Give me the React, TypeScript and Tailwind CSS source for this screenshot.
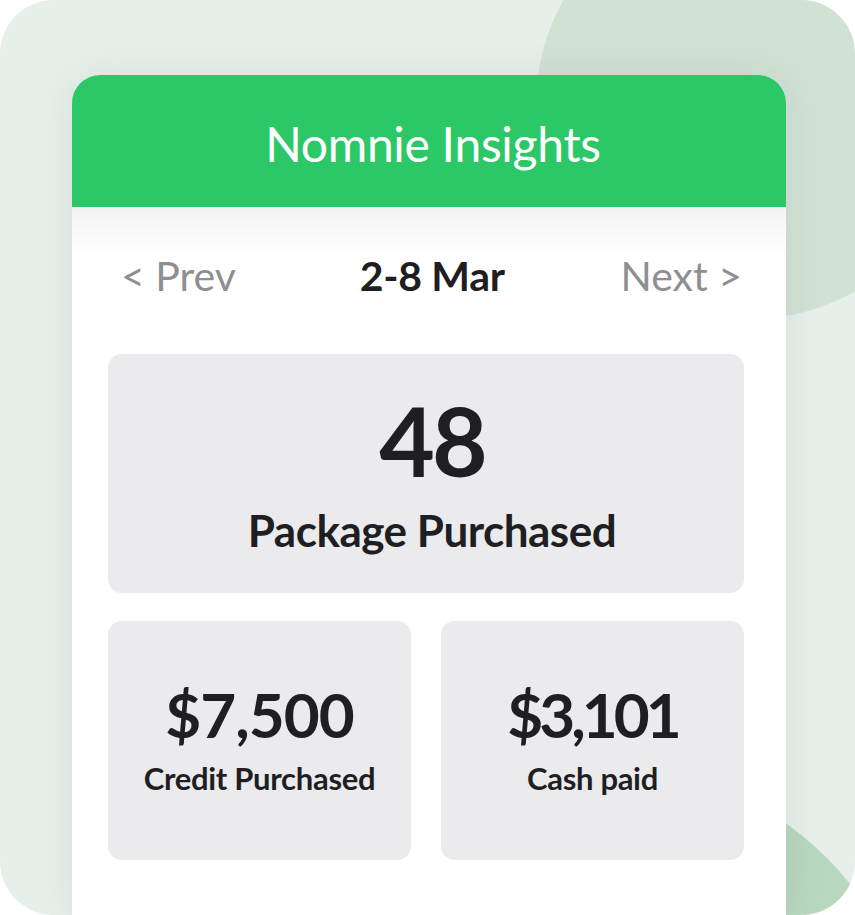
import React from "react";

export default function App() {
  const font = { fontFamily: "Lato, 'Noto Sans', sans-serif" };
  return (
    <div className="w-[855px] h-[915px] bg-white" style={font}>
      <div className="relative w-[855px] h-[915px] overflow-hidden rounded-[54px] bg-[#e6efe9]">
        <div className="absolute left-[536px] top-[-109px] w-[428px] h-[428px] rounded-full bg-[#d1e2d5]" />
        <div className="absolute left-[255px] top-[760px] w-[670px] h-[670px] rounded-full bg-[#b8d7bf]" />
        <div className="relative pt-[75px] pl-[72px]">
          <div className="w-[714px] h-[840px] rounded-t-[28px] overflow-hidden bg-white shadow-[0_0_40px_rgba(0,0,0,0.07)] flex flex-col">
            <div className="h-[132px] shrink-0 bg-[#2cc868] flex items-center justify-center pt-[6px] pl-[8px]">
              <span className="text-white text-[48px] leading-none tracking-[-0.3px]">Nomnie Insights</span>
            </div>
            <div className="flex-1 bg-[linear-gradient(to_bottom,#f3f3f3,#ffffff_48px)] pl-[36px] pr-[42px]">
              <div className="flex justify-between items-start pl-[13px] pr-[2px] pt-[48px] h-[147px]">
                <span className="text-[41px] leading-none text-[#8e8e93]">&lt; Prev</span>
                <span className="text-[41px] leading-none font-bold text-[#1f1f23] tracking-[-0.3px] pl-[8px]">2-8 Mar</span>
                <span className="text-[41px] leading-none text-[#8e8e93]">Next &gt;</span>
              </div>
              <div className="h-[239px] rounded-[14px] bg-[#ebebed] flex flex-col items-center pt-[38px] pl-[12px]">
                <span className="text-[96px] leading-none font-bold text-[#1f1f23] tracking-[-3px]">48</span>
                <span className="mt-[20px] text-[44px] leading-none font-bold text-[#1f1f23] tracking-[-0.5px]">Package Purchased</span>
              </div>
              <div className="mt-[28px] grid grid-cols-2 gap-[30px]">
                <div className="h-[239px] rounded-[14px] bg-[#ebebed] flex flex-col items-center pt-[62px]">
                  <span className="text-[62px] leading-none font-bold text-[#1f1f23] tracking-[-1px]">$7,500</span>
                  <span className="mt-[18px] text-[31px] leading-none font-bold text-[#1f1f23] tracking-[-0.3px]">Credit Purchased</span>
                </div>
                <div className="h-[239px] rounded-[14px] bg-[#ebebed] flex flex-col items-center pt-[62px]">
                  <span className="text-[62px] leading-none font-bold text-[#1f1f23] tracking-[-4px]">$3,101</span>
                  <span className="mt-[18px] text-[31px] leading-none font-bold text-[#1f1f23] tracking-[-0.3px]">Cash paid</span>
                </div>
              </div>
            </div>
          </div>
        </div>
      </div>
    </div>
  );
}
